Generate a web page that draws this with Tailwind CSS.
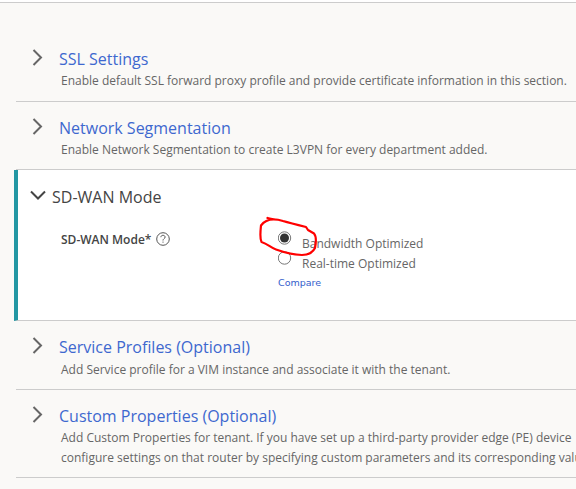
<!DOCTYPE html>
<html lang="en">
<head>
<meta charset="utf-8">
<title>Tenant settings</title>
<script src="https://cdn.jsdelivr.net/npm/@tailwindcss/browser@4"></script>
</head>
<body class="h-[489px] w-[576px] overflow-hidden bg-[#faf9f7] font-['Open_Sans','Noto_Sans',sans-serif] text-[12px] text-[#666666]">
<div class="h-[3px] border-b border-[#cccccc] bg-white"></div>
<main class="flex flex-col whitespace-nowrap pl-[14px] pt-[30px]">
  <section class="ml-[2px] flex h-[69px] border-b border-[#cccccc] pl-[16px]">
    <svg class="mt-[16px] h-[17px] w-[11px] shrink-0" viewBox="0 0 11 17" fill="none" stroke="#666" stroke-width="2"><path d="M1.5 1L9 8.5L1.5 16"/></svg>
    <div class="pl-[16px] pt-[14px]">
      <h2 class="text-[16px] leading-[24px] text-[#3e68cf]">SSL Settings</h2>
      <p class="pl-[2px] leading-[20px]">Enable default SSL forward proxy profile and provide certificate information in this section.</p>
    </div>
  </section>
  <section class="ml-[2px] flex h-[68px] border-b border-[#cccccc] pl-[16px]">
    <svg class="mt-[16px] h-[17px] w-[11px] shrink-0" viewBox="0 0 11 17" fill="none" stroke="#666" stroke-width="2"><path d="M1.5 1L9 8.5L1.5 16"/></svg>
    <div class="pl-[16px] pt-[14px]">
      <h2 class="text-[16px] leading-[24px] text-[#3e68cf]">Network Segmentation</h2>
      <p class="pl-[2px] leading-[20px]">Enable Network Segmentation to create L3VPN for every department added.</p>
    </div>
  </section>
  <section class="relative h-[151px] border-b border-[#cccccc] border-l-4 border-l-[#2397a3] bg-white pl-[12px]">
    <div class="flex pt-[15px]">
      <svg class="mt-[5px] h-[11px] w-[16px] shrink-0" viewBox="0 0 16 11" fill="none" stroke="#444" stroke-width="2"><path d="M1 1.5L8 8.5L15 1.5"/></svg>
      <h2 class="pl-[6px] text-[16px] leading-[24px] text-[#444]">SD-WAN Mode</h2>
    </div>
    <div class="flex pl-[31px] pt-[20px]">
      <div class="flex w-[217px] items-start">
        <span class="pt-px text-[12px] font-semibold leading-[20px] text-[#444]">SD-WAN Mode*</span>
        <svg class="ml-[5px] mt-[3px] size-[14px]" viewBox="0 0 14 14" fill="none" stroke="#555" stroke-width="1"><circle cx="7" cy="7" r="6.3"/><path d="M4.900 5.200C4.900 3.900 5.900 3.300 7 3.300S9.100 4 9.100 5.100C9.100 6.600 7 6.700 7 8.500M7 9.600V10.700"/></svg>
      </div>
      <div>
        <div class="flex h-[20px]">
          <svg class="mt-[2px] size-[14px]" viewBox="0 0 14 14"><circle cx="6.500" cy="7" r="6.200" fill="#fff" stroke="#777"/><circle cx="6.500" cy="7" r="4.500" fill="#333"/></svg>
          <span class="pl-[10px] pt-[5px] leading-[20px]">Bandwidth Optimized</span>
        </div>
        <div class="flex h-[20px]">
          <svg class="mt-[2px] size-[14px]" viewBox="0 0 14 14"><circle cx="6.500" cy="7" r="6.200" fill="#fff" stroke="#777"/></svg>
          <span class="pl-[10px] pt-[5px] leading-[20px]">Real-time Optimized</span>
        </div>
        <a class="block pt-[7px] font-['DejaVu_Sans',sans-serif] text-[9.5px] leading-[14px] text-[#3560cc]">Compare</a>
      </div>
    </div>
    <svg class="absolute left-[242px] top-[42px] h-[50px] w-[64px]" viewBox="260 212 64 50" overflow="visible" fill="none" stroke="#ff0000" stroke-width="2.2" stroke-linecap="round" stroke-linejoin="round"><path d="M267.5 218C273 220 278 219 283 221C290 223 298 225 306 227L308 230L314 233.500C317 237 316 243 315 248C312 254 306 255 302 255C293 255 286 253 276 249.500C271 248 268 244 261.500 242C259.500 238 260.500 231 261 225.500C265 220 273 218 283 221"/></svg>
  </section>
  <section class="ml-[2px] flex h-[69px] border-b border-[#cccccc] pl-[16px]">
    <svg class="mt-[16px] h-[17px] w-[11px] shrink-0" viewBox="0 0 11 17" fill="none" stroke="#666" stroke-width="2"><path d="M1.5 1L9 8.5L1.5 16"/></svg>
    <div class="pl-[16px] pt-[14px]">
      <h2 class="text-[16px] leading-[24px] text-[#3e68cf]">Service Profiles (Optional)</h2>
      <p class="pl-[2px] pt-px leading-[20px]">Add Service profile for a VIM instance and associate it with the tenant.</p>
    </div>
  </section>
  <section class="ml-[2px] flex h-[88px] border-b border-[#cccccc] pl-[16px]">
    <svg class="mt-[16px] h-[17px] w-[11px] shrink-0" viewBox="0 0 11 17" fill="none" stroke="#666" stroke-width="2"><path d="M1.5 1L9 8.5L1.5 16"/></svg>
    <div class="pl-[16px] pt-[14px]">
      <h2 class="text-[16px] leading-[24px] text-[#3e68cf]">Custom Properties (Optional)</h2>
      <p class="pl-[2px] leading-[20px]">Add Custom Properties for tenant. If you have set up a third-party provider edge (PE) device<br>configure settings on that router by specifying custom parameters and its corresponding values.</p>
    </div>
  </section>
</main>
</body>
</html>
